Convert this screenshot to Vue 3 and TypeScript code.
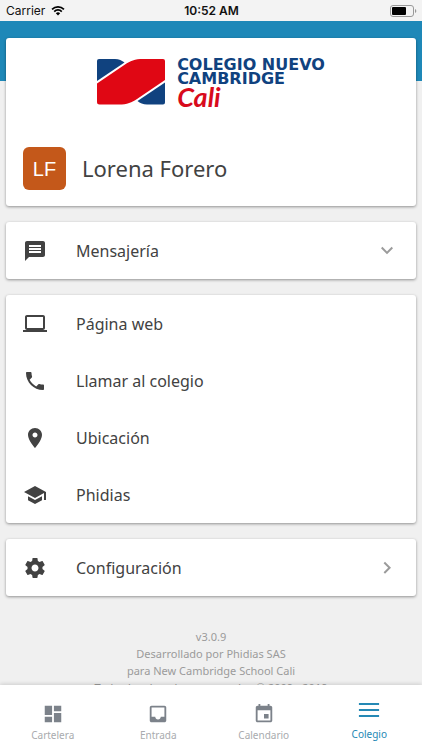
<script setup lang="ts">
import { ref } from 'vue'

interface Row {
  label: string
  icon: string
  href: string
}

const icons = {
  message: 'M20 2H4c-1.1 0-1.99.9-1.99 2L2 22l4-4h14c1.1 0 2-.9 2-2V4c0-1.1-.9-2-2-2zm-2 12H6v-2h12v2zm0-3H6V9h12v2zm0-3H6V6h12v2z',
  laptop: 'M20 18c1.1 0 1.99-.9 1.99-2L22 5c0-1.1-.9-2-2-2H4c-1.1 0-2 .9-2 2v11c0 1.1.9 2 2 2H0v2h24v-2h-4zM4 5h16v11H4V5z',
  phone: 'M6.62 10.79c1.44 2.83 3.76 5.14 6.59 6.59l2.2-2.2c.27-.27.67-.36 1.02-.24 1.12.37 2.33.57 3.57.57.55 0 1 .45 1 1V20c0 .55-.45 1-1 1-9.39 0-17-7.61-17-17 0-.55.45-1 1-1h3.5c.55 0 1 .45 1 1 0 1.25.2 2.45.57 3.57.11.35.03.74-.25 1.02l-2.2 2.2z',
  place: 'M12 2C8.13 2 5 5.13 5 9c0 5.25 7 13 7 13s7-7.75 7-13c0-3.87-3.13-7-7-7zm0 9.5c-1.38 0-2.5-1.12-2.5-2.5s1.12-2.5 2.5-2.5 2.5 1.12 2.5 2.5-1.12 2.5-2.5 2.5z',
  school: 'M5 13.18v4L12 21l7-3.82v-4L12 17l-7-3.82zM12 3L1 9l11 6 9-4.91V17h2V9L12 3z',
  settings: 'M19.43 12.98c.04-.32.07-.64.07-.98s-.03-.66-.07-.98l2.11-1.65c.19-.15.24-.42.12-.64l-2-3.46c-.12-.22-.39-.3-.61-.22l-2.49 1c-.52-.4-1.08-.73-1.69-.98l-.38-2.65C14.46 2.18 14.25 2 14 2h-4c-.25 0-.46.18-.49.42l-.38 2.65c-.61.25-1.17.59-1.69.98l-2.49-1c-.23-.09-.49 0-.61.22l-2 3.46c-.13.22-.07.49.12.64l2.11 1.65c-.04.32-.07.65-.07.98s.03.66.07.98l-2.11 1.65c-.19.15-.24.42-.12.64l2 3.46c.12.22.39.3.61.22l2.49-1c.52.4 1.08.73 1.69.98l.38 2.65c.03.24.24.42.49.42h4c.25 0 .46-.18.49-.42l.38-2.65c.61-.25 1.17-.59 1.69-.98l2.49 1c.23.09.49 0 .61-.22l2-3.46c.12-.22.07-.49-.12-.64l-2.11-1.65zM12 15.5c-1.93 0-3.5-1.57-3.5-3.5s1.57-3.5 3.5-3.5 3.5 1.57 3.5 3.5-1.57 3.5-3.5 3.5z',
  down: 'M7.41 7.84L12 12.42l4.59-4.58L18 9.25l-6 6-6-6z',
  right: 'M8.59 16.34l4.58-4.59-4.58-4.59L10 5.75l6 6-6 6z',
  dashboard: 'M3 13h8V3H3v10zm0 8h8v-6H3v6zm10 0h8V11h-8v10zm0-18v6h8V3h-8z',
  inbox: 'M19 3H4.99c-1.11 0-1.98.89-1.98 2L3 19c0 1.1.88 2 1.99 2H19c1.1 0 2-.9 2-2V5c0-1.11-.9-2-2-2zm0 12h-4c0 1.66-1.35 3-3 3s-3-1.34-3-3H4.99V5H19v10z',
  event: 'M17 12h-5v5h5v-5zM16 1v2H8V1H6v2H5c-1.11 0-1.99.9-1.99 2L3 19c0 1.1.89 2 2 2h14c1.1 0 2-.9 2-2V5c0-1.1-.9-2-2-2h-1V1h-2zm3 18H5V8h14v11z',
  menu: 'M1 1.1h22v2.2H1zM1 7.6h22v2.2H1zM1 14.2h22v2.2H1z',
}

const links: Row[] = [
  { label: 'Página web', icon: icons.laptop, href: '#web' },
  { label: 'Llamar al colegio', icon: icons.phone, href: '#llamar' },
  { label: 'Ubicación', icon: icons.place, href: '#ubicacion' },
  { label: 'Phidias', icon: icons.school, href: '#phidias' },
]

const tabs: Row[] = [
  { label: 'Cartelera', icon: icons.dashboard, href: '#cartelera' },
  { label: 'Entrada', icon: icons.inbox, href: '#entrada' },
  { label: 'Calendario', icon: icons.event, href: '#calendario' },
  { label: 'Colegio', icon: icons.menu, href: '#colegio' },
]

const activeTab = ref('Colegio')
</script>

<template>
  <div class="app">
    <header class="status">
      <div class="carrier">
        <span>Carrier</span>
        <svg class="wifi" viewBox="0 0 16 12" aria-hidden="true">
          <path d="M1.2 4.6a9.7 9.7 0 0 1 13.6 0" />
          <path d="M3.7 7.2a6.1 6.1 0 0 1 8.6 0" />
          <path class="dot" d="M8 11.7L5.5 9.2a3.6 3.6 0 0 1 5 0z" />
        </svg>
      </div>
      <span class="clock">10:52 AM</span>
      <svg class="battery" viewBox="0 0 27 12" aria-hidden="true">
        <rect class="shell" x="0.5" y="0.5" width="23" height="11" rx="2.5" />
        <rect x="2" y="2" width="14" height="8" rx="1" />
        <path class="tip" d="M25 4v4c1.8-.6 1.8-3.4 0-4z" />
      </svg>
    </header>

    <main class="content">
      <section class="card profile">
        <div class="brand">
          <svg class="flag" viewBox="0 0 68 46" aria-hidden="true">
            <path class="navy" d="M2 0h16c4 0 7 1.600 9.500 3.500L0 22V2a2 2 0 0 1 2-2z" />
            <path class="red" d="M66 0H46c-8 0-13 2-18 5.500L0 24.500V43a2.500 2.500 0 0 0 2.500 2.500H22c8 0 13-2 18-5.500l28-19V2a2 2 0 0 0-2-2z" />
            <path class="navy" d="M68 23.500V43.500a2 2 0 0 1-2 2H50c-4 0-7-1.500-9.500-3.500z" />
          </svg>
          <div class="wordmark">
            <span>COLEGIO NUEVO</span>
            <span>CAMBRIDGE</span>
            <span class="city">Cali</span>
          </div>
        </div>
        <div class="person">
          <span class="avatar">LF</span>
          <h1>Lorena Forero</h1>
        </div>
      </section>

      <section class="card">
        <button class="row" type="button">
          <svg class="icon" viewBox="0 0 24 24" aria-hidden="true"><path :d="icons.message" /></svg>
          <span class="label">Mensajería</span>
          <svg class="icon arrow" viewBox="0 0 24 24" aria-hidden="true"><path :d="icons.down" /></svg>
        </button>
      </section>

      <section class="card">
        <a v-for="link in links" :key="link.label" class="row" :href="link.href">
          <svg class="icon" viewBox="0 0 24 24" aria-hidden="true"><path :d="link.icon" /></svg>
          <span class="label">{{ link.label }}</span>
        </a>
      </section>

      <section class="card">
        <button class="row" type="button">
          <svg class="icon" viewBox="0 0 24 24" aria-hidden="true"><path :d="icons.settings" /></svg>
          <span class="label">Configuración</span>
          <svg class="icon arrow" viewBox="0 0 24 24" aria-hidden="true"><path :d="icons.right" /></svg>
        </button>
      </section>

      <footer class="about">
        <p>v3.0.9</p>
        <p>Desarrollado por Phidias SAS</p>
        <p>para New Cambridge School Cali</p>
        <p>Todos los derechos reservados © 2009 - 2019</p>
      </footer>
    </main>

    <nav class="tabs">
      <a
        v-for="tab in tabs"
        :key="tab.label"
        class="tab"
        :class="{ active: tab.label === activeTab }"
        :href="tab.href"
        @click="activeTab = tab.label"
      >
        <svg class="icon" viewBox="0 0 24 24" aria-hidden="true"><path :d="tab.icon" /></svg>
        <span>{{ tab.label }}</span>
      </a>
    </nav>
  </div>
</template>

<style>
body {
  margin: 0;
  background: #f0f0f0;
}
</style>

<style scoped>
.app {
  display: flex;
  flex-direction: column;
  height: 100vh;
  font-family: 'Noto Sans', sans-serif;
  color: #424242;
}

.status {
  display: grid;
  grid-template-columns: 1fr auto 1fr;
  align-items: center;
  flex: none;
  height: 21px;
  padding: 0 5px 0 6px;
  background: #f3f3f3;
  color: #111;
  font-family: Inter, sans-serif;
  font-size: 12px;
}

.carrier {
  display: flex;
  align-items: center;
  gap: 6px;
}

.wifi {
  width: 14px;
  height: 11px;
  fill: none;
  stroke: #000;
  stroke-width: 2;
}

.wifi .dot {
  fill: #000;
  stroke: none;
}

.clock {
  font-weight: 600;
}

.battery {
  justify-self: end;
  width: 27px;
  height: 12px;
}

.shell {
  fill: none;
  stroke: #999;
}

.tip {
  fill: #999;
}

.content {
  display: flex;
  flex-direction: column;
  gap: 16px;
  flex: 1;
  min-height: 0;
  padding: 17px 6px 0;
  overflow-y: auto;
  scrollbar-width: none;
  background: linear-gradient(#1e88b8 60px, #f0f0f0 60px);
}

.card {
  flex: none;
  border-radius: 3px;
  background: #fff;
  box-shadow: 0 1px 3px rgba(0, 0, 0, 0.4);
}

.profile {
  padding: 17px 17px 16px;
}

.brand {
  display: flex;
  justify-content: center;
  gap: 12px;
}

.flag {
  width: 68px;
  height: 46px;
  margin-top: 4px;
}

.navy {
  fill: #10427f;
}

.red {
  fill: #e00714;
}

.wordmark {
  display: flex;
  flex-direction: column;
  color: #10427f;
  font-family: 'DejaVu Sans', sans-serif;
  font-size: 16px;
  font-weight: 700;
  line-height: 14px;
  padding-top: 3px;
}

.city {
  color: #d80a1c;
  font-family: Lato, sans-serif;
  font-size: 27px;
  font-style: italic;
  line-height: 22px;
}

.person {
  display: flex;
  align-items: center;
  gap: 16px;
  margin-top: 39px;
}

.avatar {
  display: grid;
  place-items: center;
  width: 43px;
  height: 43px;
  border-radius: 6px;
  background: #c4581a;
  color: #fff;
  font-family: 'Liberation Sans', sans-serif;
  font-size: 20px;
  line-height: 24px;
}

h1 {
  margin: 0;
  font-size: 22px;
  font-weight: 400;
  line-height: 43px;
}

.row {
  display: flex;
  align-items: center;
  box-sizing: border-box;
  width: 100%;
  height: 57px;
  padding: 0 17px;
  border: 0;
  background: none;
  color: inherit;
  font: inherit;
  font-size: 16px;
  text-align: left;
  text-decoration: none;
}

.icon {
  flex: none;
  width: 24px;
  height: 24px;
  fill: currentColor;
}

.label {
  flex: 1;
  margin-left: 29px;
}

.arrow {
  color: #9b9b9b;
}

.about {
  padding-top: 16px;
  color: #9b9b9b;
  font-size: 11px;
  line-height: 17px;
  text-align: center;
}

.about p {
  margin: 0;
}

.tabs {
  position: relative;
  display: grid;
  grid-template-columns: repeat(4, 1fr);
  flex: none;
  height: 65px;
  background: #fff;
  box-shadow: 0 -1px 4px rgba(0, 0, 0, 0.15);
}

.tab {
  display: flex;
  flex-direction: column;
  align-items: center;
  padding-top: 18px;
  color: #a9abae;
  font-size: 10px;
  line-height: 16px;
  text-decoration: none;
}

.tab .icon {
  width: 22px;
  height: 22px;
  margin-bottom: 2px;
  color: #7c828a;
}

.tab.active {
  padding-top: 17px;
}

.tab.active,
.tab.active .icon {
  color: #2589b5;
}
</style>
